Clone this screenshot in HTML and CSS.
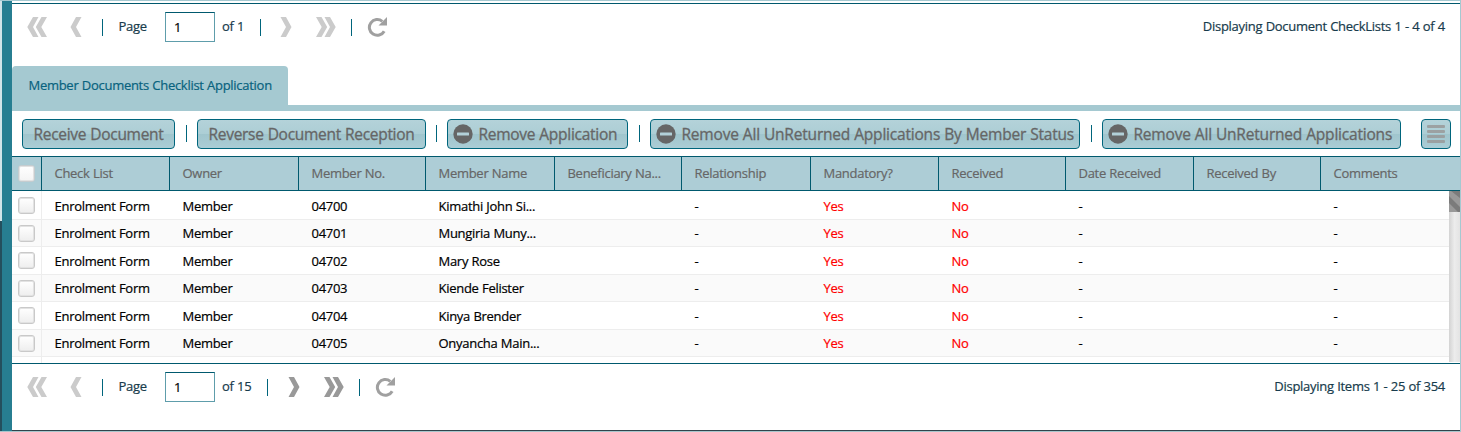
FILE: index.html
```
<!DOCTYPE html>
<html lang="en">
<head>
<meta charset="utf-8">
<title>Member Documents Checklist Application</title>
<link rel="stylesheet" href="styles.css">
</head>
<body>
<svg class="defs" width="0" height="0">
  <symbol id="chev" viewBox="0 0 12 20"><path d="M6 0H11.500L6 10L11.500 20H6L.5 10Z"/></symbol>
  <symbol id="dbl" viewBox="0 0 21 20"><path d="M6 0H11.500L6 10L11.500 20H6L.3 10Z"/><path d="M14.500 0H20L14.300 10L20 20H14.500L8.800 10Z"/></symbol>
  <symbol id="reload" viewBox="0 0 20 20"><path d="M15.300 4.300A7.900 7.900 0 1 0 17.200 14.200" fill="none" stroke="currentColor" stroke-width="3"/><path d="M20 0V8.500H11.500Z"/></symbol>
  <symbol id="minus" viewBox="0 0 20 20"><circle cx="10" cy="10" r="9.700"/><rect x="4" y="8.500" width="12" height="3" rx=".5" fill="#b2d0d8"/></symbol>
</svg>
<div class="window">
  <div class="rail"></div>
  <main class="panel">
    <div class="pager first">
      <svg class="ic dbl"><use href="#dbl"/></svg>
      <svg class="ic chev"><use href="#chev"/></svg>
      <i class="sep"></i>
      <span class="page-label">Page</span>
      <span class="page-input">1</span>
      <span class="of">of 1</span>
      <i class="sep"></i>
      <svg class="ic chev flip"><use href="#chev"/></svg>
      <svg class="ic dbl flip"><use href="#dbl"/></svg>
      <i class="sep"></i>
      <svg class="ic reload"><use href="#reload"/></svg>
      <span class="status">Displaying Document CheckLists 1 - 4 of 4</span>
    </div>
    <div class="tabs"><div class="tab">Member Documents Checklist Application</div></div>
    <div class="toolbar">
      <div class="btn b1"><span>Receive Document</span></div><i class="sep"></i>
      <div class="btn b2"><span>Reverse Document Reception</span></div><i class="sep"></i>
      <div class="btn b3"><svg class="minus"><use href="#minus"/></svg><span>Remove Application</span></div><i class="sep"></i>
      <div class="btn b4"><svg class="minus"><use href="#minus"/></svg><span>Remove All UnReturned Applications By Member Status</span></div><i class="sep"></i>
      <div class="btn b5"><svg class="minus"><use href="#minus"/></svg><span>Remove All UnReturned Applications</span></div>
      <div class="btn menu"><i></i><i></i><i></i><i></i></div>
    </div>
    <div class="row head">
      <div class="check"><i></i></div><div>Check List</div><div>Owner</div><div>Member No.</div><div>Member Name</div><div>Beneficiary Na...</div><div>Relationship</div><div>Mandatory?</div><div>Received</div><div>Date Received</div><div>Received By</div><div>Comments</div>
    </div>
    <div class="grid">
      <div class="rows">
        <div class="row"><div class="check"><i></i></div><div>Enrolment Form</div><div>Member</div><div>04700</div><div>Kimathi John Si...</div><div></div><div>-</div><div class="red">Yes</div><div class="red">No</div><div>-</div><div></div><div>-</div></div>
        <div class="row alt"><div class="check"><i></i></div><div>Enrolment Form</div><div>Member</div><div>04701</div><div>Mungiria Muny...</div><div></div><div>-</div><div class="red">Yes</div><div class="red">No</div><div>-</div><div></div><div>-</div></div>
        <div class="row"><div class="check"><i></i></div><div>Enrolment Form</div><div>Member</div><div>04702</div><div>Mary Rose</div><div></div><div>-</div><div class="red">Yes</div><div class="red">No</div><div>-</div><div></div><div>-</div></div>
        <div class="row alt"><div class="check"><i></i></div><div>Enrolment Form</div><div>Member</div><div>04703</div><div>Kiende Felister</div><div></div><div>-</div><div class="red">Yes</div><div class="red">No</div><div>-</div><div></div><div>-</div></div>
        <div class="row"><div class="check"><i></i></div><div>Enrolment Form</div><div>Member</div><div>04704</div><div>Kinya Brender</div><div></div><div>-</div><div class="red">Yes</div><div class="red">No</div><div>-</div><div></div><div>-</div></div>
        <div class="row alt"><div class="check"><i></i></div><div>Enrolment Form</div><div>Member</div><div>04705</div><div>Onyancha Main...</div><div></div><div>-</div><div class="red">Yes</div><div class="red">No</div><div>-</div><div></div><div>-</div></div>
        <div class="row stub"><div class="check"></div></div>
      </div>
      <div class="scroll"><svg class="thumb" viewBox="0 0 11 21"><path d="M0 0H11V21H0Z" fill="#999"/><path d="M2 0H11V7ZM0 5L11 16V21H9L0 12Z" fill="#7b7b7b"/></svg></div>
    </div>
    <div class="pager second">
      <svg class="ic dbl"><use href="#dbl"/></svg>
      <svg class="ic chev"><use href="#chev"/></svg>
      <i class="sep"></i>
      <span class="page-label">Page</span>
      <span class="page-input">1</span>
      <span class="of">of 15</span>
      <i class="sep"></i>
      <svg class="ic chev flip on"><use href="#chev"/></svg>
      <svg class="ic dbl flip on"><use href="#dbl"/></svg>
      <i class="sep"></i>
      <svg class="ic reload"><use href="#reload"/></svg>
      <span class="status">Displaying Items 1 - 25 of 354</span>
    </div>
  </main>
</div>
</body>
</html>
```
FILE: styles.css
```
* { box-sizing: border-box; }
body { margin: 0; font: 13px/18px "Open Sans", "Noto Sans", sans-serif; letter-spacing: -.28px; word-spacing: .3px; -webkit-text-stroke: .2px; color: #173b4c; background: #fff; overflow: hidden; }
.defs { display: block; height: 0; }
.window { display: flex; width: 1461px; height: 432px; border-top: 1px solid #a5c9d1; border-right: 1px solid #a5c9d1; border-bottom: 1px solid #a9c5cb; }
.rail { width: 12px; border-left: 2px solid; border-image: linear-gradient(#d3e4e8 220px, #244f5d 220px) 2; background: #277e91; background-clip: padding-box; }
.panel { width: 1448px; display: flex; flex-direction: column; border-bottom: 1px solid #30434b; }

.pager { display: flex; align-items: center; flex: none; height: 47px; padding-left: 15px; border-top: 1px solid #00596e; }
.first { margin: 2px 0 1px; }
.ic { display: block; flex: none; height: 20px; fill: #cbcbcb; }
.dbl { width: 21px; }
.chev { width: 12px; margin-left: 22px; }
.flip { transform: scaleX(-1); }
.flip.chev { margin-left: 19px; }
.flip.dbl { margin-left: 23px; }
.on { fill: #999; }
.reload { width: 20px; margin-left: 15px; fill: #a0a0a0; color: #a0a0a0; }
.sep { flex: none; width: 1px; height: 17px; background: #00657c; }
.pager .sep { margin-left: 20px; margin-top: 1px; }
.pager .dbl + .sep { margin-left: 15px; }
.page-label { width: 47px; margin-left: 15.500px; padding-bottom: 2px; }
.page-input { width: 50px; height: 30px; margin-left: -.5px; padding: 5px 8px; color: #000; border: 1px solid #5e9dab; border-top-color: #00596e; }
.of { width: 38px; margin-left: 7px; padding-bottom: 2px; }
.pager .of + .sep { margin-left: 0; }
.second .of { width: 45px; }
.second .of + .sep + .chev { margin-left: 20px; }
.status { margin-left: auto; margin-right: 15px; padding-bottom: 2px; }

.tabs { height: 60px; padding-top: 15px; border-bottom: 6px solid #a5c9d1; }
.tab { width: 276px; height: 39px; padding: 10px 16.500px; border-radius: 4px 4px 0 0; background: #a5c9d1; color: #08627e; white-space: nowrap; }

.toolbar { display: flex; align-items: flex-start; height: 45px; padding: 8px 9px 0 10px; }
.toolbar .sep { margin: 6px 10px 0 11px; }
.btn { display: flex; align-items: center; height: 30px; padding-left: 10.500px; border: 1px solid #00657c; border-radius: 4px; background: linear-gradient(#b4d2d9, #acced5 50%, #a0c5cd 51%, #abcdd5); color: #666; font-size: 15.5px; letter-spacing: -.2px; line-height: 28px; white-space: nowrap; -webkit-text-stroke: .3px #666; }
.b1 { width: 153px; letter-spacing: -.29px; }
.b2 { width: 229px; letter-spacing: -.29px; }
.b2 + .sep { margin-left: 10px; }
.b3 { width: 181px; letter-spacing: -.27px; }
.b4 { width: 430px; }
.b5 { width: 299px; }
.b3, .b4, .b5 { padding-left: 4.500px; }
.minus { flex: none; width: 20px; height: 20px; margin-right: 6px; margin-bottom: 1px; fill: #666; }
.menu { width: 30px; margin-left: auto; padding: 0; flex-direction: column; justify-content: center; gap: 2px; }
.menu i { width: 18px; height: 3px; background: #999; border-radius: 1px; opacity: .85; }

.row { display: grid; grid-template-columns: 30px 128px 129px 127px 129px 127px 129px 128px 127px 128px 127px 1fr; color: #000; border-bottom: 1px solid #ededed; white-space: nowrap; }
.row > div { padding-left: 12.500px; }
.row > .check { padding: 5px 0 0 6px; border-right: 1px solid #ededed; }
.check i { display: block; width: 17px; height: 17px; border: 1px solid #c9c9c9; border-radius: 3px; box-shadow: inset 0 0 0 1px #e2e2e2; background: linear-gradient(#fff, #eee); }
.head { height: 35px; line-height: 33px; color: #666; background: #adcdd6; border-top: 1px solid #00596e; border-bottom: 1px solid #00596e; }
.head > div, .head > .check { border-right: 1px solid #00596e; }
.head > div:last-child { border-right: 0; }
.head > .check { padding-top: 8px; }
.head .check i { border-color: #c5cccf; background: linear-gradient(#fff, #f4f4f4); }
.grid { display: flex; height: 172px; overflow: hidden; }
.rows { width: 1437px; }
.rows .row { height: 28px; line-height: 29px; }
.rows .row.alt { height: 27px; line-height: 27px; }
.rows .row:first-child { height: 29px; line-height: 31px; }
.rows .row:first-child .check { padding-top: 6px; }
.rows .row.stub { height: 6px; border-bottom: 0; }
.rows .row .check { line-height: 0; }
.alt { background: #fafafa; }
.red { color: #f00; }
.scroll { width: 11px; height: 171px; background: linear-gradient(90deg, #d3d3d3, #ececec 50%, #e3e3e3); }
.thumb { display: block; width: 11px; height: 21px; }
```
